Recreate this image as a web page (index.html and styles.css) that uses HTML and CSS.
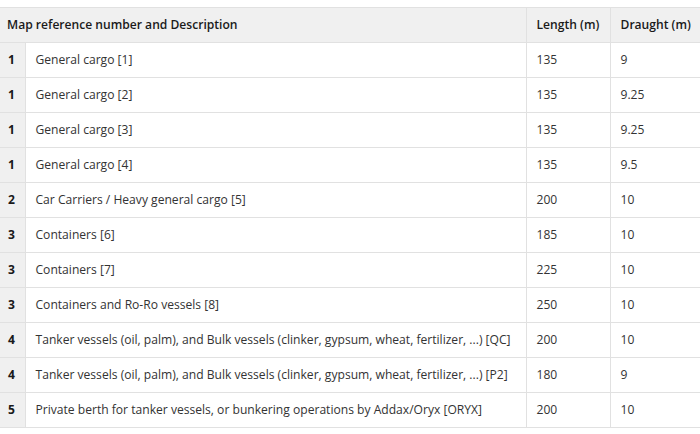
FILE: index.html
```html
<!DOCTYPE html>
<html>
<head>
<meta charset="utf-8">
<link rel="stylesheet" href="styles.css">
</head>
<body>
<div class="wrap">
<table class="berths">
<colgroup>
<col class="c-num">
<col class="c-desc">
<col class="c-len">
<col class="c-dra">
</colgroup>
<thead>
<tr><th colspan="2" class="h-first">Map reference number and Description</th><th>Length (m)</th><th>Draught (m)</th></tr>
</thead>
<tbody>
<tr><td class="num">1</td><td>General cargo [1]</td><td>135</td><td>9</td></tr>
<tr><td class="num">1</td><td>General cargo [2]</td><td>135</td><td>9.25</td></tr>
<tr><td class="num">1</td><td>General cargo [3]</td><td>135</td><td>9.25</td></tr>
<tr><td class="num">1</td><td>General cargo [4]</td><td>135</td><td>9.5</td></tr>
<tr><td class="num">2</td><td>Car Carriers / Heavy general cargo [5]</td><td>200</td><td>10</td></tr>
<tr><td class="num">3</td><td>Containers [6]</td><td>185</td><td>10</td></tr>
<tr><td class="num">3</td><td>Containers [7]</td><td>225</td><td>10</td></tr>
<tr><td class="num">3</td><td>Containers and Ro-Ro vessels [8]</td><td>250</td><td>10</td></tr>
<tr><td class="num">4</td><td>Tanker vessels (oil, palm), and Bulk vessels (clinker, gypsum, wheat, fertilizer, ...) [QC]</td><td>200</td><td>10</td></tr>
<tr><td class="num">4</td><td>Tanker vessels (oil, palm), and Bulk vessels (clinker, gypsum, wheat, fertilizer, ...) [P2]</td><td>180</td><td>9</td></tr>
<tr><td class="num">5</td><td>Private berth for tanker vessels, or bunkering operations by Addax/Oryx [ORYX]</td><td>200</td><td>10</td></tr>
</tbody>
</table>
</div>
</body>
</html>
```
FILE: styles.css
```css
html, body {
  margin: 0;
  padding: 0;
  background: #fff;
}
.wrap {
  padding-top: 7px;
  width: 700px;
  overflow: hidden;
}
.berths {
  border-collapse: collapse;
  table-layout: fixed;
  width: 701px;
  font-family: "Open Sans", sans-serif;
  font-size: 12.1px;
  color: #333;
}
.c-num { width: 25px; }
.c-desc { width: 501px; }
.c-len { width: 84px; }
.c-dra { width: 91px; }
.berths th, .berths td {
  border: 1px solid #e1e1e1;
  height: 35px;
  padding: 0 10px 2px;
  text-align: left;
  vertical-align: middle;
  white-space: nowrap;
  box-sizing: border-box;
}
.berths tr > :first-child { border-left: none; }
.berths th {
  background: #f0f0f0;
  color: #1a1a1a;
  font-weight: 600;
}
.berths th.h-first { padding-left: 7px; }
.berths td.num {
  background: #f0f0f0;
  color: #1a1a1a;
  font-weight: 700;
  padding: 0 0 2px 8px;
}
```
